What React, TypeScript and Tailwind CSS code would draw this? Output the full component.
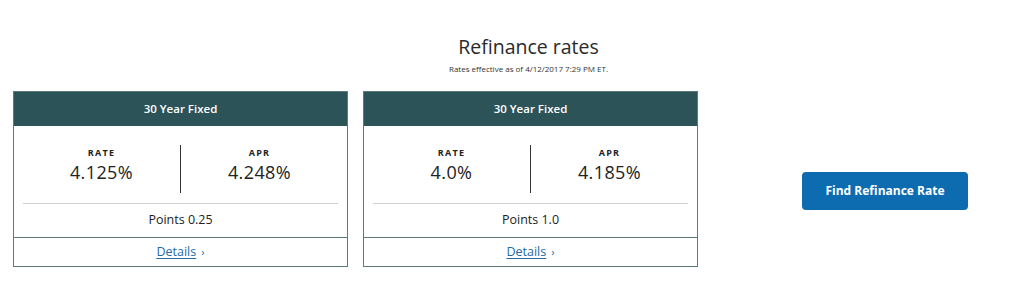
import React from "react";

const font = { fontFamily: '"Open Sans", "Liberation Sans", sans-serif' };

function Card({ rate, apr, points }: { rate: string; apr: string; points: string }) {
  return (
    <div className="w-[335px] h-[176px] border border-[#5d7b7f] flex flex-col bg-white">
      <div className="h-[34px] bg-[#2c5357] text-white text-[11.5px] font-semibold flex items-center justify-center">
        30 Year Fixed
      </div>
      <div className="flex flex-col px-[9px]">
        <div className="flex items-stretch pt-[19px] pb-[10px]">
          <div className="flex-1 flex flex-col items-center pt-[2px]">
            <div className="text-[9px] font-bold tracking-[1.3px] text-[#222] leading-[12px]">RATE</div>
            <div className="text-[18px] text-[#222] leading-[26px] tracking-[0.4px]">{rate}</div>
          </div>
          <div className="w-[1px] h-[48px] bg-[#333]" />
          <div className="flex-1 flex flex-col items-center pt-[2px]">
            <div className="text-[9px] font-bold tracking-[1.3px] text-[#222] leading-[12px]">APR</div>
            <div className="text-[18px] text-[#222] leading-[26px] tracking-[0.4px]">{apr}</div>
          </div>
        </div>
        <div className="h-[1px] bg-[#cfcfcf]" />
        <div className="h-[33px] flex items-center justify-center text-[12.5px] text-[#222]">{points}</div>
      </div>
      <div className="h-[1px] bg-[#5d7b7f]" />
      <div className="flex-1 flex items-center justify-center text-[12.5px] text-[#1c6aa6]">
        <span className="underline underline-offset-2">Details</span>
        <span className="ml-[5px] text-[11px]">›</span>
      </div>
    </div>
  );
}

export default function App() {
  return (
    <div className="w-[1024px] h-[282px] bg-white overflow-hidden" style={font}>
      <div className="w-[1044px] pl-[13px] pt-[33px] flex flex-col items-center">
        <div className="text-[19.5px] text-[#2a2a2a] leading-[28px]">Refinance rates</div>
        <div className="text-[8px] text-[#333] leading-[10px] mt-[3px]">Rates effective as of 4/12/2017 7:29 PM ET.</div>
      </div>
      <div className="flex pl-[13px] pt-[17px] items-start">
        <Card rate="4.125%" apr="4.248%" points="Points 0.25" />
        <div className="w-[15px]" />
        <Card rate="4.0%" apr="4.185%" points="Points 1.0" />
        <div className="ml-[104px] mt-[81px] w-[166px] h-[38px] rounded-[4px] bg-[#0d6cb0] text-white text-[12px] font-bold flex items-center justify-center">
          Find Refinance Rate
        </div>
      </div>
    </div>
  );
}
